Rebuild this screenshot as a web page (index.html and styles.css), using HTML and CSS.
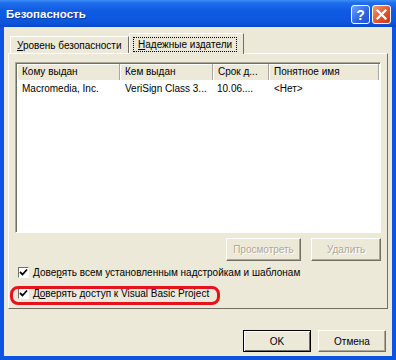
FILE: index.html
```html
<!DOCTYPE html>
<html lang="ru">
<head>
    <meta charset="UTF-8">
    <title>Безопасность</title>
    <link rel="stylesheet" href="styles.css">
</head>
<body>

<div class="window">
    <div class="titlebar">
        <span class="title">Безопасность</span>
        <div class="caption-buttons">
            <span class="cap-btn help">?</span>
            <span class="cap-btn close">
                <svg width="11" height="11" viewBox="0 0 11 11">
                    <path d="M1.5 1.5 L9.5 9.5 M9.5 1.5 L1.5 9.5" stroke="#fff" stroke-width="2.2" stroke-linecap="square"/>
                </svg>
            </span>
        </div>
    </div>

    <div class="client">
        <div class="tabs">
            <div class="tab"><u>У</u>ровень безопасности</div>
            <div class="tab active"><span class="focus"><u>Н</u>адежные издатели</span></div>
        </div>

        <div class="panel">
            <div class="listbox">
                <div class="list-head">
                    <span>Кому выдан</span>
                    <span>Кем выдан</span>
                    <span>Срок д...</span>
                    <span>Понятное имя</span>
                </div>
                <div class="list-row">
                    <span>Macromedia, Inc.</span>
                    <span>VeriSign Class 3...</span>
                    <span>10.06....</span>
                    <span>&lt;Нет&gt;</span>
                </div>
            </div>

            <div class="list-buttons">
                <button class="btn view" disabled>Просмотреть</button>
                <button class="btn remove" disabled>Удалить</button>
            </div>

            <label class="check first">
                <span class="box">
                    <svg width="9" height="9" viewBox="0 0 9 9"><path d="M1 4 L3.5 6.5 L8 1.5" fill="none" stroke="#000" stroke-width="1.8"/></svg>
                </span>
                Дове<u>р</u>ять всем установленным надстройкам и шаблонам
            </label>
            <label class="check second">
                <span class="box">
                    <svg width="9" height="9" viewBox="0 0 9 9"><path d="M1 4 L3.5 6.5 L8 1.5" fill="none" stroke="#000" stroke-width="1.8"/></svg>
                </span>
                Д<u>о</u>верять доступ к Visual Basic Project
            </label>

            <div class="highlight"></div>
        </div>

        <div class="dialog-buttons">
            <button class="btn default">OK</button>
            <button class="btn">Отмена</button>
        </div>
    </div>
</div>

</body>
</html>
```

FILE: styles.css
```css
body {
    margin: 0;
    background: #fff;
    font-family: "Liberation Sans", Arial, sans-serif;
    font-size: 10px;
    color: #000;
}
.window {
    width: 396px;
    height: 360px;
    display: flex;
    flex-direction: column;
}
.titlebar {
    height: 27px;
    flex: none;
    display: flex;
    align-items: center;
    justify-content: space-between;
    padding: 0 5px 0 6px;
    background: linear-gradient(#3d8ef5 0, #1f6cec 3px, #0f5ce2 40%, #0b55dc 85%, #0848c8 100%);
}
.title {
    color: #fff;
    font-weight: bold;
    font-size: 11.5px;
    text-shadow: 1px 1px #0a3a9c;
    margin-top: 1px;
}
.caption-buttons {
    display: flex;
    gap: 2px;
    margin-top: 2px;
}
.cap-btn {
    width: 17px;
    height: 17px;
    border: 1px solid #fff;
    border-radius: 3px;
    display: flex;
    align-items: center;
    justify-content: center;
    color: #fff;
    font-weight: bold;
    font-size: 14px;
}
.help {
    background: linear-gradient(135deg, #6fa2f7, #2a64e4 60%, #1f53cf);
}
.close {
    background: linear-gradient(135deg, #f29a7a, #e2552c 55%, #c8391a);
}
.client {
    flex: 1;
    background: #ece9d8;
    border: 4px solid #0b55e2;
    border-top: 0;
    padding: 6px 4px 0;
    display: flex;
    flex-direction: column;
}
.tabs {
    height: 20px;
    display: flex;
    align-items: flex-end;
    padding-left: 2px;
    position: relative;
    z-index: 1;
}
.tab {
    height: 17px;
    width: 119px;
    box-sizing: border-box;
    padding: 3px 0 0 6px;
    border: 1px solid;
    border-color: #fff #716f64 transparent #fff;
    border-bottom: 0;
    background: #ece9d8;
    white-space: nowrap;
}
.tab.active {
    width: 115px;
    height: 21px;
    margin-bottom: -1px;
    padding: 3px 0 0 3px;
}
.focus {
    display: inline-block;
    border: 1px dotted #000;
    padding: 1px 4px;
}
.panel {
    height: 256px;
    box-sizing: border-box;
    border: 1px solid;
    border-color: #fff #716f64 #716f64 #fff;
    padding: 8px 6px 0;
    position: relative;
}
.listbox {
    height: 171px;
    box-sizing: border-box;
    background: #fff;
    border: 1px solid;
    border-color: #aca899 #fff #fff #aca899;
    box-shadow: inset 1px 1px #716f64;
    padding: 1px 0 0 1px;
}
.list-head, .list-row {
    display: grid;
    grid-template-columns: 103px 93px 56px 1fr;
}
.list-head {
    height: 16px;
    margin-right: 1px;
}
.list-head span {
    background: #ece9d8;
    border-right: 1px solid #aca899;
    box-shadow: inset 1px 1px #fff;
    padding: 2px 0 0 5px;
}
.list-row {
    margin-top: 3px;
}
.list-row span {
    padding-left: 5px;
    white-space: nowrap;
}
.list-row span:nth-child(3) {
    padding-left: 4px;
}
.list-buttons {
    display: flex;
    justify-content: flex-end;
    gap: 10px;
    margin-top: 5px;
}
.btn {
    height: 23px;
    font-family: inherit;
    font-size: 10px;
    background: #ece9d8;
    border: 1px solid;
    border-color: #fff #716f64 #716f64 #fff;
    box-shadow: inset -1px -1px #aca899;
    padding: 0;
}
.btn:disabled {
    color: #aca899;
    text-shadow: 1px 1px #fff;
}
.view {
    width: 75px;
}
.remove {
    width: 70px;
}
.check {
    display: flex;
    align-items: center;
    height: 14px;
    padding-left: 3px;
}
.check.first {
    margin-top: 4px;
}
.check.second {
    margin-top: 7px;
}
.box {
    width: 11px;
    height: 11px;
    box-sizing: border-box;
    background: #fff;
    border: 1px solid;
    border-color: #716f64 #fff #fff #716f64;
    display: flex;
    align-items: center;
    justify-content: center;
    margin-right: 4px;
}
.highlight {
    position: absolute;
    left: 1px;
    top: 232px;
    width: 204px;
    height: 13px;
    border: 3px solid #e3141b;
    border-radius: 8px;
}
.dialog-buttons {
    display: flex;
    justify-content: flex-end;
    gap: 7px;
    margin-top: 21px;
    padding-right: 2px;
}
.dialog-buttons .btn {
    width: 68px;
    height: 22px;
}
.btn.default {
    border-color: #000;
    box-shadow: inset 1px 1px #fff, inset -1px -1px #716f64;
}
```
